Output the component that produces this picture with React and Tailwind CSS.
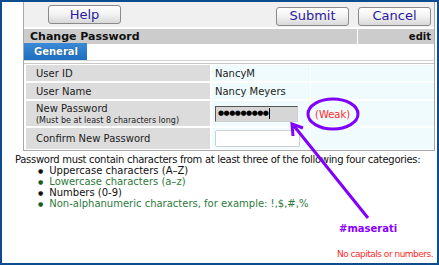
import React from 'react';

const font = { fontFamily: '"DejaVu Sans", Verdana, sans-serif' };

const Button = ({ children, className = '' }) => (
  <button
    className={`h-[19px] w-[73px] rounded-[3px] border border-[#8a8a8a] bg-gradient-to-b from-white via-[#f2f2f2] to-[#d8d8d8] text-[13px] leading-[16px] text-[#2a1aa0] ${className}`}
  >
    {children}
  </button>
);

const Row = ({ label, sub, children, extra, h }) => (
  <div className={`flex gap-[1px] ${h}`}>
    <div className="w-[184px] mr-[1px] bg-[#dcdcdc] pl-[10px] flex flex-col justify-center text-[10px] leading-[13px] text-[#222]">
      <span>{label}</span>
      {sub && <span className="text-[8px] leading-[11px]">{sub}</span>}
    </div>
    <div className="w-[98px] bg-[#f0fbfd] pl-[3px] flex items-center text-[10px] text-[#222]">{children}</div>
    <div className="flex-1 bg-[#f0fbfd] flex items-center">{extra}</div>
  </div>
);

export default function App() {
  return (
    <div
      style={font}
      className="relative w-[439px] h-[265px] overflow-hidden border-2 border-[#0d4d8f] bg-white"
    >
      {/* panel */}
      <div className="ml-[21px] mr-[2px] border-l border-r border-b border-[#a8a8a8]">
        {/* toolbar */}
        <div className="flex items-center h-[25px] bg-[#f0f0f0] pl-[24px] pr-[3px]">
          <Button>Help</Button>
          <div className="flex-1" />
          <Button className="mt-[3px]">Submit</Button>
          <Button className="ml-[9px] mt-[3px]">Cancel</Button>
        </div>
        {/* header */}
        <div className="flex h-[15px] mt-[2px] bg-[#cccccc]">
          <div className="flex-1 pl-[6px] text-[11px] font-bold leading-[15px] text-[#111]">Change Password</div>
          <div className="w-[77px] border-l border-white text-right pr-[3px] text-[10px] font-bold leading-[15px] text-[#111]">
            edit
          </div>
        </div>
        {/* tab */}
        <div className="flex items-end h-[17px] border-b border-[#d4d4d4]">
          <div className="h-[17px] w-[63px] bg-gradient-to-b from-[#3a8ad8] to-[#1f6fc0] pl-[10px] text-[10px] font-bold leading-[17px] text-white [text-shadow:0_0_1px_#0a3a70]">
            General
          </div>
        </div>
        {/* form table */}
        <div className="mt-[2px] flex flex-col gap-[2px] border-t border-[#c8c8c8] pt-[1px] pl-[2px] pb-[1px]">
          <Row label="User ID" h="h-[16px]">NancyM</Row>
          <Row label="User Name" h="h-[16px]">Nancy Meyers</Row>
          <Row
            label="New Password"
            sub="(Must be at least 8 characters long)"
            h="h-[25px]"
            extra={<span className="ml-[4px] mt-[2px] text-[10px] text-[#ff2a2a]">(Weak)</span>}
          >
            <div className="flex items-center h-[16px] w-[83px] border border-t-[#555] border-l-[#555] border-r-[#d0d0d0] border-b-[#d0d0d0] bg-[#d6d6d6] pl-[2px] text-[7px] leading-[7px] tracking-[-0.5px] text-black">
              ●●●●●●●●●<span className="ml-[1px] inline-block h-[11px] w-px bg-black" />
            </div>
          </Row>
          <Row label="Confirm New Password" h="h-[21px]">
            <div className="h-[17px] w-[85px] rounded-[2px] border border-[#cfcfcf] bg-white" />
          </Row>
        </div>
      </div>

      {/* rules */}
      <div className="pl-[13px] pt-[3px] text-[10px] leading-[11px] text-[#111]">
        <p className="whitespace-nowrap tracking-[-0.3px]">Password must contain characters from at least three of the following four categories:</p>
        <ul className="pl-[23px] flex flex-col">
          <li className="flex items-center gap-[6px] h-[11px]"><span className="text-[6px]">●</span>Uppercase characters (A–Z)</li>
          <li className="flex items-center gap-[6px] h-[11px] text-[#2d7a3a]"><span className="text-[6px] text-[#1a5a26]">●</span>Lowercase characters (a–z)</li>
          <li className="flex items-center gap-[6px] h-[11px]"><span className="text-[6px]">●</span>Numbers (0-9)</li>
          <li className="flex items-center gap-[6px] h-[11px] text-[#2d7a3a]"><span className="text-[6px] text-[#1a5a26]">●</span>Non-alphanumeric characters, for example: !,$,#,%</li>
        </ul>
      </div>

      {/* annotations */}
      <svg className="absolute left-0 top-0 pointer-events-none" width="439" height="265">
        <ellipse cx="331" cy="112" rx="25" ry="15" fill="none" stroke="#8000ff" strokeWidth="3" />
        <line x1="366" y1="216" x2="292" y2="124" stroke="#8000ff" strokeWidth="3" />
        <polyline points="291,134 290,122 301,126" fill="none" stroke="#8000ff" strokeWidth="3" strokeLinejoin="miter" />
      </svg>
      <span className="absolute left-[337px] top-[219px] text-[10px] font-bold text-[#8a00ff]">#maserati</span>
      <span className="absolute left-[335px] top-[246px] text-[9px] tracking-[-0.5px] text-[#ff2a2a] whitespace-nowrap">No capitals or numbers.</span>
    </div>
  );
}
